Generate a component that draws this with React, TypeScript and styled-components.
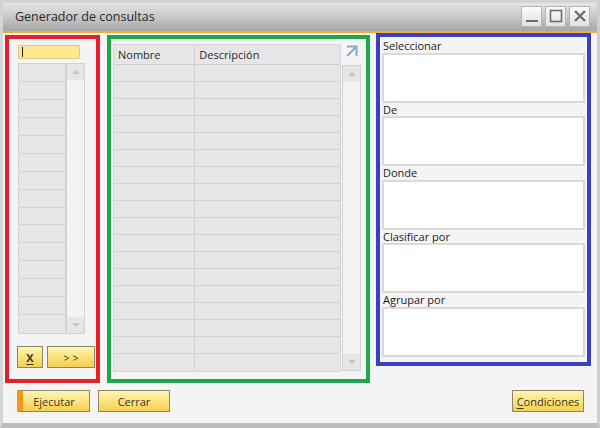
import React from "react";
import styled, { createGlobalStyle } from "styled-components";

const GlobalStyle = createGlobalStyle`
  html, body {
    margin: 0;
    padding: 0;
    background: #ffffff;
  }
  * {
    box-sizing: border-box;
  }
`;

const FONT = `"Open Sans", "Liberation Sans", sans-serif`;

const App = () => {
  const listRows = Array.from({ length: 15 });
  const gridRows = Array.from({ length: 18 });
  const fields = ["Seleccionar", "De", "Donde", "Clasificar por", "Agrupar por"];

  return (
    <>
      <GlobalStyle />
      <Window>
        <TitleBar>
          <Title>Generador de consultas</Title>
          <WinButtons>
            <WinButton>
              <svg width="14" height="14" viewBox="0 0 14 14">
                <rect x="1" y="11" width="12" height="2" fill="#6e6e6e" />
              </svg>
            </WinButton>
            <WinButton>
              <svg width="14" height="14" viewBox="0 0 14 14">
                <rect x="1.5" y="1.5" width="11" height="11" fill="none" stroke="#6e6e6e" strokeWidth="1.6" />
              </svg>
            </WinButton>
            <WinButton>
              <svg width="14" height="14" viewBox="0 0 14 14">
                <path d="M2 2 L12 12 M12 2 L2 12" stroke="#6e6e6e" strokeWidth="2.4" />
              </svg>
            </WinButton>
          </WinButtons>
        </TitleBar>

        <Content>
          <Panel color="#e2202b" w={95} h={348} top={2}>
            <FindInput>
              <Caret />
            </FindInput>
            <ListBox>
              <ListCells>
                {listRows.map((_, i) => (
                  <ListCell key={i} />
                ))}
              </ListCells>
              <ScrollBar>
                <ScrollArrow>
                  <Tri up />
                </ScrollArrow>
                <ScrollArrow>
                  <Tri />
                </ScrollArrow>
              </ScrollBar>
            </ListBox>
            <SmallButtons>
              <YellowButton w={26}>
                <b>
                  <u>X</u>
                </b>
              </YellowButton>
              <YellowButton w={48}>&gt; &gt;</YellowButton>
            </SmallButtons>
          </Panel>

          <Panel color="#1fa84a" w={263} h={348} top={2}>
            <GridArea>
              <Grid>
                <GridHeader>
                  <HeadCell w={82}>Nombre</HeadCell>
                  <HeadCell w={146}>Descripción</HeadCell>
                </GridHeader>
                {gridRows.map((_, i) => (
                  <GridRow key={i}>
                    <Cell w={82} />
                    <Cell w={146} />
                  </GridRow>
                ))}
              </Grid>
              <GridSide>
                <ExpandIcon>
                  <svg width="13" height="13" viewBox="0 0 13 13">
                    <path d="M2 1.5 H11.5 V11" fill="none" stroke="#86a9d6" strokeWidth="2" />
                    <path d="M11 2 L2 11" stroke="#86a9d6" strokeWidth="2" />
                  </svg>
                </ExpandIcon>
                <ScrollBar h={306}>
                  <ScrollArrow>
                    <Tri up />
                  </ScrollArrow>
                  <ScrollArrow>
                    <Tri />
                  </ScrollArrow>
                </ScrollBar>
              </GridSide>
            </GridArea>
          </Panel>

          <Panel color="#3a3fc4" w={215} h={333} top={0}>
            <Fields>
              {fields.map((f) => (
                <Field key={f}>
                  <FieldLabel>{f}</FieldLabel>
                  <FieldBox />
                </Field>
              ))}
            </Fields>
          </Panel>
        </Content>

        <Footer>
          <FooterLeft>
            <YellowButton w={73} h={22} stripe>
              Ejecutar
            </YellowButton>
            <YellowButton w={72} h={22}>
              Cerrar
            </YellowButton>
          </FooterLeft>
          <YellowButton w={72} h={22}>
            <u>C</u>ondiciones
          </YellowButton>
        </Footer>
      </Window>
    </>
  );
};

export default App;

const Window = styled.div`
  width: 600px;
  height: 428px;
  display: flex;
  flex-direction: column;
  background: #f4f4f4;
  border-top: 3px solid #d4d4d4;
  border-left: 3px solid #d4d4d4;
  border-right: 3px solid #cfcfcf;
  border-bottom: 5px solid #bdbdbd;
  font-family: ${FONT};
  overflow: hidden;
`;

const TitleBar = styled.div`
  height: 30px;
  flex-shrink: 0;
  display: flex;
  align-items: center;
  justify-content: space-between;
  padding: 0 7px 0 12px;
  background: linear-gradient(#e4e4e4 0%, #cbcbcb 45%, #a6a6a6 100%);
  border-bottom: 2px solid #f0b132;
`;

const Title = styled.span`
  font-size: 12.5px;
  color: #2a2a2a;
  margin-top: -2px;
`;

const WinButtons = styled.div`
  display: flex;
  gap: 3px;
  margin-top: -2px;
`;

const WinButton = styled.div`
  width: 21px;
  height: 21px;
  display: flex;
  align-items: center;
  justify-content: center;
  background: linear-gradient(#fafafa, #e2e2e2);
  border: 1px solid #b4b4b4;
`;

const Content = styled.div`
  display: flex;
  align-items: flex-start;
  gap: 7px;
  padding-left: 2px;
  & > :last-child {
    margin-left: -1px;
  }
`;

const Panel = styled.div<{ color: string; w: number; h: number; top: number }>`
  width: ${({ w }) => w}px;
  height: ${({ h }) => h}px;
  margin-top: ${({ top }) => top}px;
  border: 4px solid ${({ color }) => color};
  flex-shrink: 0;
`;

const FindInput = styled.div`
  width: 62px;
  height: 14px;
  margin: 6px 0 0 9px;
  background: #fde88f;
  border: 1px solid #dccb84;
  border-radius: 1px;
  position: relative;
`;

const Caret = styled.span`
  position: absolute;
  left: 3px;
  top: 1px;
  width: 1px;
  height: 10px;
  background: #222;
`;

const ListBox = styled.div`
  display: flex;
  margin: 4px 0 0 9px;
  width: 67px;
  height: 271px;
`;

const ListCells = styled.div`
  width: 48px;
  display: flex;
  flex-direction: column;
  border: 1px solid #d2d2d2;
  border-right: none;
  background: #e6e6e6;
`;

const ListCell = styled.div`
  height: 18px;
  border-bottom: 1px solid #d3d3d3;
  border-right: 1px solid #d6d6d6;
  &:last-child {
    border-bottom: none;
  }
`;

const ScrollBar = styled.div<{ h?: number }>`
  width: 19px;
  height: ${({ h }) => (h ? `${h}px` : "100%")};
  display: flex;
  flex-direction: column;
  justify-content: space-between;
  background: #f3f3f3;
  border: 1px solid #d2d2d2;
`;

const ScrollArrow = styled.div`
  height: 16px;
  display: flex;
  align-items: center;
  justify-content: center;
  background: #e6e6e6;
`;

const Tri = styled.span<{ up?: boolean }>`
  width: 0;
  height: 0;
  border-left: 4px solid transparent;
  border-right: 4px solid transparent;
  ${({ up }) => (up ? "border-bottom: 4px solid #c6c6c6;" : "border-top: 4px solid #c6c6c6;")}
`;

const SmallButtons = styled.div`
  display: flex;
  gap: 4px;
  margin: 12px 0 0 8px;
`;

const YellowButton = styled.div<{ w: number; h?: number; stripe?: boolean }>`
  width: ${({ w }) => w}px;
  height: ${({ h }) => h ?? 22}px;
  display: flex;
  align-items: center;
  justify-content: center;
  font-size: 11px;
  color: #3b3520;
  background: linear-gradient(#fff4b6 0%, #fbe37e 50%, #f3cf52 100%);
  border: 1px solid #8f8568;
  border-left: ${({ stripe }) => (stripe ? "6px solid #f39a12" : "1px solid #8f8568")};
  padding-right: ${({ stripe }) => (stripe ? "4px" : "0")};
  u {
    text-decoration-thickness: 1px;
    text-underline-offset: 2px;
  }
`;

const GridArea = styled.div`
  display: flex;
  margin: 5px 0 0 2px;
  gap: 1px;
`;

const Grid = styled.div`
  width: 228px;
  display: flex;
  flex-direction: column;
  background: #e6e6e6;
  border: 1px solid #d7d7d7;
`;

const GridHeader = styled.div`
  display: flex;
  height: 20px;
  border-bottom: 1px solid #cfcfcf;
`;

const HeadCell = styled.div<{ w: number }>`
  width: ${({ w }) => w}px;
  font-size: 11px;
  color: #2b2b2b;
  line-height: 19px;
  padding-left: 4px;
  border-right: 1px solid #d0d0d0;
  &:last-child {
    border-right: none;
  }
`;

const GridRow = styled.div`
  display: flex;
  height: 17px;
  border-bottom: 1px solid #d2d2d2;
  &:last-child {
    border-bottom: none;
  }
`;

const Cell = styled.div<{ w: number }>`
  width: ${({ w }) => w}px;
  border-right: 1px solid #d0d0d0;
  &:last-child {
    border-right: none;
  }
`;

const GridSide = styled.div`
  display: flex;
  flex-direction: column;
  gap: 6px;
`;

const ExpandIcon = styled.div`
  width: 18px;
  height: 15px;
  display: flex;
  align-items: center;
  justify-content: center;
`;

const Fields = styled.div`
  display: flex;
  flex-direction: column;
  padding: 2px 2px 0 2px;
`;

const Field = styled.div`
  display: flex;
  flex-direction: column;
`;

const FieldLabel = styled.div`
  height: 13.5px;
  font-size: 11px;
  line-height: 13px;
  color: #222;
  padding-left: 1px;
`;

const FieldBox = styled.div`
  width: 203px;
  height: 50px;
  background: #ffffff;
  border: 2px solid #d9d9d9;
  border-radius: 1px;
`;

const Footer = styled.div`
  display: flex;
  justify-content: space-between;
  padding: 7px 13px 0 14px;
`;

const FooterLeft = styled.div`
  display: flex;
  gap: 8px;
`;
